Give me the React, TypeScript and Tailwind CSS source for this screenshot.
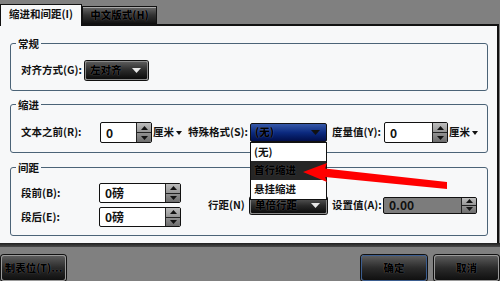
import React from 'react';

const halo = '[text-shadow:0_0_1px_rgba(255,255,255,0.4)]';

function Spinner() {
  return (
    <div className="flex h-full w-[15px] flex-col border-l border-[#222] bg-gradient-to-b from-[#bdbdbd] to-[#6d6d6d]">
      <div className="flex flex-1 items-center justify-center border-b border-[#222]">
        <svg width="7" height="4" viewBox="0 0 7 4">
          <path d="M0 4 L3.5 0 L7 4 Z" fill="#111" />
        </svg>
      </div>
      <div className="flex flex-1 items-center justify-center">
        <svg width="7" height="4" viewBox="0 0 7 4">
          <path d="M0 0 L3.5 4 L7 0 Z" fill="#111" />
        </svg>
      </div>
    </div>
  );
}

function SpinBox({ value, width, height, disabled }: { value: string; width: string; height: string; disabled?: boolean }) {
  return (
    <div
      className={`flex ${width} ${height} shrink-0 overflow-hidden rounded-[2px] border border-[#111] ${
        disabled ? 'bg-[#7c7c7c]' : 'bg-white'
      }`}
    >
      <span className="flex flex-1 items-center pl-[5px] text-[12px] text-[#111]">{value}</span>
      <Spinner />
    </div>
  );
}

function DarkSelect({ label, width, height }: { label: string; width: string; height: string }) {
  return (
    <div
      className={`flex ${width} ${height} shrink-0 items-center justify-between rounded-[2px] border border-[#8a8a8a] bg-gradient-to-b from-[#5a5a5a] via-[#2a2a2a] to-[#0c0c0c] pl-[4px] pr-[6px] shadow-[0_0_0_1px_#111]`}
    >
      <span className={`font-black text-black ${halo}`}>{label}</span>
      <svg width="9" height="5" viewBox="0 0 9 5">
        <path d="M0 0 L9 0 L4.5 5 Z" fill="#e8e8e8" />
      </svg>
    </div>
  );
}

function Unit() {
  return (
    <span className="flex items-center gap-[2px] text-[#111]">
      厘米
      <svg width="6" height="4" viewBox="0 0 6 4">
        <path d="M0 0 L6 0 L3 4 Z" fill="#111" />
      </svg>
    </span>
  );
}

function Group({ title, className, children }: { title: string; className: string; children: React.ReactNode }) {
  return (
    <div className={`relative ml-[10px] w-[478px] rounded-[3px] border border-[#4b6377] ${className}`}>
      <span className="absolute left-[5px] top-[-7px] bg-[#f7f8f9] px-[2px] leading-[13px] text-[#111]">{title}</span>
      {children}
    </div>
  );
}

function BottomButton({ label, width, primary }: { label: string; width: string; primary?: boolean }) {
  return (
    <div
      className={`flex ${width} h-[26px] items-center justify-center rounded-[3px] border ${
        primary ? 'border-[#3b5d8f]' : 'border-[#9a9a9a]'
      } bg-gradient-to-b from-[#5c5c5c] via-[#2b2b2b] to-[#101010] shadow-[0_0_0_1px_#111]`}
    >
      <span className={`font-black text-black ${halo}`}>{label}</span>
    </div>
  );
}

export default function App() {
  return (
    <div className="relative flex h-[281px] w-[500px] flex-col overflow-hidden whitespace-nowrap bg-[#808080] font-['Noto_Sans_CJK_SC',sans-serif] text-[10.5px] font-bold leading-none">
      {/* tabs */}
      <div className="relative z-10 flex h-[24px] items-end">
        <div className="mb-[-2px] flex h-[22px] w-[82px] items-center justify-center border-l border-r border-t border-[#111] bg-[#f7f8f9] pb-[2px] text-[#111]">
          缩进和间距(I)
        </div>
        <div className="flex h-[18px] w-[75px] items-center justify-center border border-[#111] bg-gradient-to-b from-[#6a6a6a] via-[#333] to-[#151515] shadow-[inset_0_1px_0_#aaa]">
          <span className={`font-black text-black ${halo}`}>中文版式(H)</span>
        </div>
      </div>

      {/* panel */}
      <div className="flex h-[219px] w-[499px] flex-col border-r-2 border-t-2 border-[#111] bg-[#f7f8f9]">
        <Group title="常规" className="mt-[17px] h-[48px] pl-[10px] pt-[17px]">
          <div className="flex items-center">
            <span className="w-[64px] text-[#111]">对齐方式(G):</span>
            <DarkSelect label="左对齐" width="w-[63px]" height="h-[19px]" />
          </div>
        </Group>

        <Group title="缩进" className="mt-[13px] h-[49px] pl-[10px] pt-[17px]">
          <div className="flex items-center">
            <span className="w-[79px] shrink-0 text-[#111]">文本之前(R):</span>
            <SpinBox value="0" width="w-[52px]" height="h-[21px]" />
            <span className="ml-[1px] w-[35px] shrink-0">
              <Unit />
            </span>
            <span className="w-[62px] shrink-0 text-[#111]">特殊格式(S):</span>
            <div className="flex h-[19px] w-[77px] shrink-0 items-center justify-between rounded-[2px] border border-[#111] bg-gradient-to-b from-[#3658a8] via-[#0c2a80] to-[#020e4a] pl-[4px] pr-[6px]">
              <span className={`font-black text-black ${halo}`}>(无)</span>
              <svg width="9" height="5" viewBox="0 0 9 5">
                <path d="M0 0 L9 0 L4.5 5 Z" fill="#111" />
              </svg>
            </div>
            <span className="ml-[5px] w-[52px] shrink-0 text-[#111]">度量值(Y):</span>
            <SpinBox value="0" width="w-[64px]" height="h-[21px]" />
            <span className="ml-[1px]">
              <Unit />
            </span>
          </div>
        </Group>

        <Group title="间距" className="mt-[14px] h-[69px] pl-[10px] pt-[15px]">
          <div className="flex items-center">
            <div className="flex shrink-0 flex-col gap-[4px]">
              <div className="flex items-center">
                <span className="w-[78px] text-[#111]">段前(B):</span>
                <SpinBox value="0磅" width="w-[82px]" height="h-[20px]" />
              </div>
              <div className="flex items-center">
                <span className="w-[78px] text-[#111]">段后(E):</span>
                <SpinBox value="0磅" width="w-[82px]" height="h-[20px]" />
              </div>
            </div>
            <div className="ml-[27px] flex items-center">
              <span className="w-[42px] shrink-0 text-[#111]">行距(N)</span>
              <DarkSelect label="单倍行距" width="w-[77px]" height="h-[17px]" />
              <span className="ml-[5px] w-[51px] shrink-0 text-[#111]">设置值(A):</span>
              <SpinBox value="0.00" width="w-[94px]" height="h-[17px]" disabled />
            </div>
          </div>
        </Group>
      </div>

      {/* bottom bar */}
      <div className="h-[4px] w-full bg-gradient-to-b from-[#202020] to-[#4a4a4a]" />
      <div className="flex flex-1 items-start pl-[1px] pt-[8px]">
        <BottomButton label="制表位(T)..." width="w-[65px]" />
        <div className="flex-1" />
        <div className="flex gap-[7px] pr-[1px]">
          <BottomButton label="确定" width="w-[66px]" primary />
          <BottomButton label="取消" width="w-[65px]" />
        </div>
      </div>

      {/* open dropdown list */}
      <div className="absolute left-[250px] top-[142px] flex w-[77px] flex-col border border-[#111] bg-white">
        <div className="flex h-[18px] items-center pl-[3px] text-[#111]">(无)</div>
        <div className="flex h-[19px] items-center bg-[#262626] pl-[3px] font-black text-black [text-shadow:0_0_1px_rgba(255,255,255,0.3)]">
          首行缩进
        </div>
        <div className="flex h-[19px] items-center pl-[3px] text-[#111]">悬挂缩进</div>
      </div>

      {/* red arrow */}
      <svg className="pointer-events-none absolute left-0 top-0" width="500" height="281" viewBox="0 0 500 281">
        <polygon points="303,172 327,163 325,168.5 447,182 447,189 325,177 327,182" fill="#ff0000" />
      </svg>
    </div>
  );
}
